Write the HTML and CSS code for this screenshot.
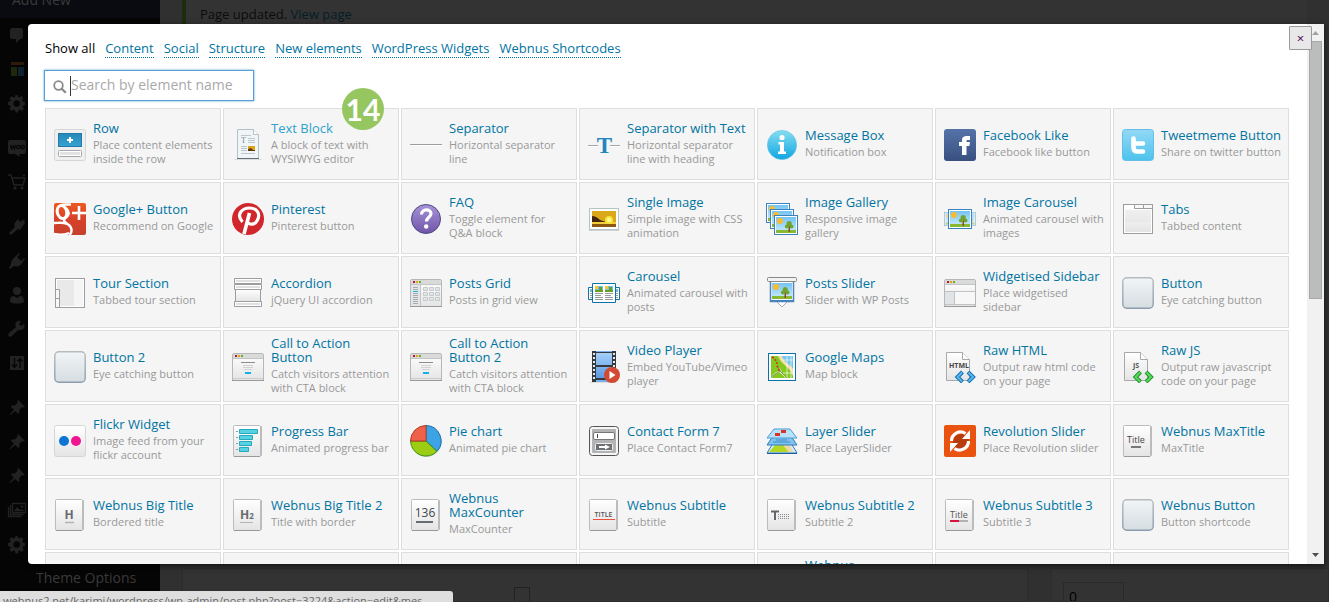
FILE: index.html
```html
<!DOCTYPE html>
<html lang="en">
<head>
<meta charset="utf-8">
<title>Add element</title>
<link rel="stylesheet" href="styles.css">
</head>
<body>
<svg class="defs" aria-hidden="true">
  <defs>
    <linearGradient id="gGrey" x1="0" y1="0" x2="0" y2="1"><stop offset="0" stop-color="#fff"/><stop offset="1" stop-color="#e4e4e4"/></linearGradient>
    <linearGradient id="gBtn" x1="0" y1="0" x2="0" y2="1"><stop offset="0" stop-color="#f1f5f6"/><stop offset="1" stop-color="#d5dde1"/></linearGradient>
    <linearGradient id="gBtnEdge" x1="0" y1="0" x2="0" y2="1"><stop offset="0" stop-color="#b6bbbd"/><stop offset="1" stop-color="#8b9dad"/></linearGradient>
    <linearGradient id="gSky" x1="0" y1="0" x2="0" y2="1"><stop offset="0" stop-color="#74c4f4"/><stop offset="1" stop-color="#cdecfb"/></linearGradient>
    <linearGradient id="gInfo" x1="0" y1="0" x2="0" y2="1"><stop offset="0" stop-color="#84def0"/><stop offset="1" stop-color="#10a6e2"/></linearGradient>
    <linearGradient id="gFb" x1="0" y1="0" x2="0" y2="1"><stop offset="0" stop-color="#5573a8"/><stop offset="1" stop-color="#3a4f80"/></linearGradient>
    <linearGradient id="gTw" x1="0" y1="0" x2="0" y2="1"><stop offset="0" stop-color="#94d8f6"/><stop offset="1" stop-color="#4cc3ec"/></linearGradient>
    <linearGradient id="gGp" x1="0" y1="0" x2="0" y2="1"><stop offset="0" stop-color="#ee5a22"/><stop offset=".5" stop-color="#d8412a"/><stop offset="1" stop-color="#c5402e"/></linearGradient>
    <linearGradient id="gFaq" x1="0" y1="0" x2="0" y2="1"><stop offset="0" stop-color="#a893d8"/><stop offset="1" stop-color="#6f55a8"/></linearGradient>
    <linearGradient id="gRow" x1="0" y1="0" x2="0" y2="1"><stop offset="0" stop-color="#2587b8"/><stop offset="1" stop-color="#36a3d2"/></linearGradient>
    <linearGradient id="gFilm" x1="0" y1="0" x2="0" y2="1"><stop offset="0" stop-color="#a4d0f8"/><stop offset="1" stop-color="#5d98e4"/></linearGradient>
  </defs>
  <symbol id="btn" viewBox="0 0 32 32"><rect x=".8" y=".8" width="30.4" height="30.4" rx="4" fill="url(#gBtn)" stroke="url(#gBtnEdge)" stroke-width="1.4"/></symbol>
  <symbol id="card" viewBox="0 0 32 32"><path d="M26 1.5h3.5v29H26z" fill="#f4f4f4" stroke="#bbb"/><rect x="1.5" y=".5" width="27" height="31" rx="1" fill="url(#gGrey)" stroke="#bcbcbc"/><path d="M2 31.5h26" stroke="#999"/></symbol>
  <symbol id="win" viewBox="0 0 32 32"><rect x=".5" y="2.500" width="31" height="27" rx="1.500" fill="url(#gGrey)" stroke="#b7b7b7"/><path d="M1 3h30v4H1z" fill="#d9dbdb"/><path d="M1 7.500h30" stroke="#c4c4c4"/><path d="M0 29.500h32" stroke="#999"/><path d="M3 4h2v2H3z" fill="#c4102c"/><path d="M6 4h2v2H6z" fill="#e0a510"/><path d="M9 4h2v2H9z" fill="#76a72d"/></symbol>
  <symbol id="cta" viewBox="0 0 32 32"><use href="#win" width="32" height="32"/><path d="M9 11.500h14" stroke="#8c8c8c"/><path d="M11 14.500h10M11 16.500h10M12 18.500h8" stroke="#d2d2d2"/><path d="M13 21h6v2h-6z" fill="#14b1e7"/><path d="M1 27.500h30" stroke="#ccc"/></symbol>
  <symbol id="pic" viewBox="0 0 24 20"><rect x=".5" y=".5" width="23" height="19" fill="#fff" stroke="#3c82bd"/><rect x="2" y="2" width="20" height="16" fill="url(#gSky)"/><path d="M2 15h20v3H2z" fill="#89b833"/><circle cx="6" cy="6" r="3" fill="#f7bc31"/><path d="M14.500 10h1.500v7h-1.500z" fill="#8a4b22"/><circle cx="15.200" cy="8.500" r="2.600" fill="#71a42d"/><circle cx="12.900" cy="11.500" r="2" fill="#71a42d"/><circle cx="17.500" cy="11.500" r="2" fill="#71a42d"/></symbol>
  <symbol id="doc" viewBox="0 0 32 32"><path d="M2.500 1.500h16l7 7v21h-23z" fill="url(#gGrey)" stroke="#a9a9a9"/><path d="M18.500 1.500v7h7" fill="#fff" stroke="#a9a9a9"/></symbol>
  <symbol id="pin" viewBox="0 0 20 20"><path d="M10.400 3l.9-.9 6.600 6.600-1 .9-1.800-.3-2.800 2.800.1 3-1 .9-3.200-3.100-5.200 4.400-.5-.5 4.400-5.200L3.800 8.400l.9-1 3 .1 2.800-2.700z"/></symbol>
  <symbol id="gear" viewBox="0 0 20 20"><path fill-rule="evenodd" d="M18 12v-3l-2.300-.4-.6-1.500 1.400-1.900-2.200-2.100-1.900 1.300-1.500-.6L10.500 2h-2l-.5 1.900-1.600.6-1.800-1.300-2.100 2.100 1.300 1.900-.6 1.400L1 9v3l2.200.4.600 1.500-1.300 1.900 2.100 2.100 1.800-1.300 1.600.6.500 2.300h2.500l.4-2.300 1.500-.6 1.900 1.300 2.200-2.100-1.400-1.900.6-1.500zM9.700 13.800a3.300 3.300 0 110-6.600 3.300 3.300 0 010 6.600z"/></symbol>
</svg>

<div class="admin">
  <nav class="sidebar" aria-label="Admin menu">
    <div class="sub-top">Add New</div>
    <div class="menu-group">
      <svg viewBox="0 0 20 20"><path d="M5 3h9a2 2 0 012 2v7a2 2 0 01-2 2h-1l-4 4v-4H5a2 2 0 01-2-2V5a2 2 0 012-2z"/></svg>
      <svg viewBox="0 0 20 20"><path fill="#2e1b0a" d="M4 3h13v3H4z"/><path fill="#1e280e" d="M4 8h6v9H4z"/><path fill="#102130" d="M11 8h6v9h-6z"/></svg>
      <svg viewBox="0 0 20 20"><use href="#gear"/></svg>
    </div>
    <div class="menu-group">
      <svg viewBox="0 0 20 20"><path d="M3 2h14a2 2 0 012 2v10a2 2 0 01-2 2h-5l1 3-5-3H3a2 2 0 01-2-2V4a2 2 0 012-2z"/><path d="M3.500 7l1.200 4 1.500-3 1.300 3 1-4" fill="none" stroke="#060606" stroke-width="1.200"/><circle cx="11.300" cy="9" r="1.700" fill="none" stroke="#060606" stroke-width="1.200"/><circle cx="15.700" cy="9" r="1.700" fill="none" stroke="#060606" stroke-width="1.200"/></svg>
      <svg viewBox="0 0 20 20"><path d="M1 3h3l3 10h9l2-7H5M16 4l2-1" fill="none" stroke="#222" stroke-width="1.500"/><circle cx="8" cy="16" r="1.600"/><circle cx="15" cy="16" r="1.600"/></svg>
    </div>
    <div class="menu-group">
      <svg viewBox="0 0 20 20"><path d="M11 2l2 3 4-3 1 4-5 7-2-1-7 6-2-2 6-6-1-3z"/></svg>
      <svg viewBox="0 0 20 20"><path d="M12 2l1 1-3 3 4 4 3-3 1 1-3 4c-1 3-5 4-8 3l-4 3-1-1 2-4c0-3 2-6 5-8z"/></svg>
      <svg viewBox="0 0 20 20"><circle cx="10" cy="6" r="4"/><path d="M3 17c0-4 1-6 4-6l3 2 3-2c3 0 4 2 4 6-3 2-11 2-14 0z"/></svg>
      <svg viewBox="0 0 20 20"><path d="M17 5l-3 2-2-2 2-3c-4-1-7 2-5 6l-7 6c-2 3 1 5 3 3l6-6c5 1 8-3 6-6z"/></svg>
      <svg viewBox="0 0 20 20"><path d="M3 3h14v14H3z"/><path d="M7.500 5v9M5 11.500l2.500 3 2.500-3M13 15V6M10.500 8.500L13 5.500l2.500 3" fill="none" stroke="#060606" stroke-width="1.400"/></svg>
    </div>
    <div class="menu-group">
      <svg viewBox="0 0 20 20"><use href="#pin"/></svg>
      <svg viewBox="0 0 20 20"><use href="#pin"/></svg>
      <svg viewBox="0 0 20 20"><use href="#pin"/></svg>
      <svg viewBox="0 0 20 20"><path d="M5.500 3.500h13v9h-13zM3.500 5v9.500h13M1.500 7v9.500h13" fill="none" stroke="#222" stroke-width="1.300"/><path d="M7 11l3-4 3 3 2-1 2 2z"/><circle cx="15" cy="6.500" r="1.200"/></svg>
      <svg viewBox="0 0 20 20"><use href="#gear"/></svg>
    </div>
    <div class="sub-bottom">Theme Options</div>
  </nav>
  <main class="page">
    <p class="notice">Page updated. <a href="#view">View page</a></p>
    <div class="panels">
      <div class="panel panel-main"><label for="transp">Transparent header:</label><input type="checkbox" id="transp"></div>
      <div class="panel panel-side"><input type="text" value="0" aria-label="Order"></div>
    </div>
  </main>
</div>

<section class="modal" role="dialog" aria-label="Add element">
  <div class="content">
    <nav class="filters">
      <a class="current" href="#all">Show all</a>
      <a href="#content">Content</a>
      <a href="#social">Social</a>
      <a href="#structure">Structure</a>
      <a href="#new">New elements</a>
      <a href="#widgets">WordPress Widgets</a>
      <a href="#shortcodes">Webnus Shortcodes</a>
    </nav>
    <div class="search">
      <svg viewBox="0 0 14 14" aria-hidden="true"><circle cx="5.500" cy="5.500" r="4.300" fill="none" stroke="#8a8a8a" stroke-width="1.800"/><path d="M8.500 8.500l4.300 4.300" stroke="#8a8a8a" stroke-width="2.300"/></svg>
      <input type="text" placeholder="Search by element name" aria-label="Search by element name">
    </div>
    <ul class="grid">
      <li><a class="el" href="#el"><svg viewBox="0 0 32 32"><rect x=".5" y=".5" width="31" height="31" rx="2" fill="#efefef" stroke="#d6d6d6"/><rect x="4.500" y="4.500" width="23" height="13" fill="url(#gRow)" stroke="#2079a8"/><path d="M16 8v6M13 11h6" stroke="#fff" stroke-width="2"/><rect x="4.500" y="21.500" width="23" height="6" rx="1" fill="#fff" stroke="#a6a6a6"/><path d="M6 23h20v3H6z" fill="#e2e2e2"/></svg><span class="txt"><b>Row</b><i>Place content elements inside the row</i></span></a></li>
      <li class="hot"><a class="el" href="#el"><svg viewBox="0 0 32 32"><path d="M2 30.500h28" stroke="#ddd"/><path d="M5.500.5h16l5 5v24h-21z" fill="#f0f6f7" stroke="#b3c2c5"/><path d="M5 29.500h22" stroke="#5f7074"/><path d="M21.500.5v5h5" fill="#fff" stroke="#b3c2c5"/><text x="9" y="14" class="serif" font-size="8" fill="#788">T</text><path d="M9 6.500h10M16 9.500h7M16 11.500h7M16 13.500h7M9 17.500h6M9 19.500h6M9 21.500h6M9 24.500h14" stroke="#bcc8ca"/><path d="M16 17h7v5h-7z" fill="#d9a516"/><path d="M16 20l3-1 2 2h2v1h-7z" fill="#65380c"/></svg><span class="txt"><b>Text Block</b><i>A block of text with WYSIWYG editor</i></span></a><span class="badge">14</span></li>
      <li><a class="el" href="#el"><svg viewBox="0 0 32 32"><path d="M0 15.500h32" stroke="#9d9d9d"/><path d="M0 16.500h32" stroke="#fff"/></svg><span class="txt"><b>Separator</b><i>Horizontal separator line</i></span></a></li>
      <li><a class="el" href="#el"><svg viewBox="0 0 32 32"><path d="M0 16.500h10M22 16.500h10" stroke="#a6a6a6"/><path d="M0 17.500h10M22 17.500h10" stroke="#fff"/><text x="16.500" y="24" class="serif" font-size="23" font-weight="bold" text-anchor="middle" fill="#2484be">T</text></svg><span class="txt"><b>Separator with Text</b><i>Horizontal separator line with heading</i></span></a></li>
      <li><a class="el" href="#el"><svg viewBox="0 0 32 32"><circle cx="16" cy="16" r="14.600" fill="url(#gInfo)" stroke="#5fc0e4" stroke-width=".6"/><circle cx="16" cy="8.500" r="2.600" fill="#fff"/><path d="M12.500 13h5.500v9.500h2V25h-8v-2.500h2v-7h-1.500z" fill="#fff"/></svg><span class="txt"><b>Message Box</b><i>Notification box</i></span></a></li>
      <li><a class="el" href="#el"><svg viewBox="0 0 32 32"><rect width="32" height="32" rx="3" fill="url(#gFb)"/><path d="M18 26V17h-3v-4h3v-2c0-3 2-4 4.500-4H26v4h-2.200c-.8 0-1.300.3-1.300 1.200v.8H26l-.6 4h-2.900v9z" fill="#fff"/></svg><span class="txt"><b>Facebook Like</b><i>Facebook like button</i></span></a></li>
      <li><a class="el" href="#el"><svg viewBox="0 0 32 32"><rect x=".5" y=".5" width="31" height="31" rx="3" fill="url(#gTw)" stroke="#63bfea"/><path d="M11.500 9.500v9q0 4 4 4H21M11.500 14.500H21" fill="none" stroke="#fff" stroke-width="4.600" stroke-linecap="round"/></svg><span class="txt"><b>Tweetmeme Button</b><i>Share on twitter button</i></span></a></li>

      <li><a class="el" href="#el"><svg viewBox="0 0 32 32"><rect width="32" height="32" rx="2" fill="url(#gGp)"/><g fill="none" stroke="#fff"><ellipse cx="8" cy="9" rx="4.700" ry="6.600" transform="rotate(-14 8 9)" stroke-width="3"/><path d="M17 1.500h-5q-3 0-6 1M12 5c5 5 2 8-.5 10-3 2-1 4 2 6 5 3 5 8 2 11M0 20c5 0 9-1 13 1M0 31c5 1 10 1 15-1" stroke-width="2.400"/><path d="M18 10h14M25 3v14" stroke-width="2.600"/></g></svg><span class="txt"><b>Google+ Button</b><i>Recommend on Google</i></span></a></li>
      <li><a class="el" href="#el"><svg viewBox="0 0 32 32"><circle cx="16" cy="16" r="16" fill="#d1272c"/><path d="M10.500 19c-7-8 0-14 7-14 8 0 11 6 8 12-3 6-9 4.500-9.500 2" fill="none" stroke="#fff" stroke-width="3.200"/><path d="M17.500 10l-5.500 21" stroke="#fff" stroke-width="3.600"/></svg><span class="txt"><b>Pinterest</b><i>Pinterest button</i></span></a></li>
      <li><a class="el" href="#el"><svg viewBox="0 0 32 32"><circle cx="16" cy="16" r="14.500" fill="url(#gFaq)" stroke="#4c4a80"/><path d="M11.500 11.500c0-6 9.500-6 9.500-1 0 4-4.500 3.500-4.500 8" fill="none" stroke="#fff" stroke-width="3.200"/><circle cx="16.200" cy="23.500" r="2.200" fill="#fff"/></svg><span class="txt"><b>FAQ</b><i>Toggle element for Q&amp;A&nbsp;block</i></span></a></li>
      <li><a class="el" href="#el"><svg viewBox="0 0 32 32"><rect x="1.500" y="5.500" width="29" height="21" fill="#fff" stroke="#b6c3c6"/><path d="M1 27.500h30" stroke="#d2d2d2"/><path d="M4 8h24v16H4z" fill="#dba81b"/><path d="M4 19h24v2H4z" fill="#f2cf3a"/><path d="M4 13q4 0 8 4l6 2H4z" fill="#44250f"/><path d="M4 21h24v3H4z" fill="#8b5811"/><circle cx="21" cy="17" r="4" fill="#f4e43c"/><circle cx="21" cy="17" r="2" fill="#fffb9c"/></svg><span class="txt"><b>Single Image</b><i>Simple image with CSS animation</i></span></a></li>
      <li><a class="el" href="#el"><svg viewBox="0 0 32 32"><use href="#pic" width="24" height="20"/><use href="#pic" x="4" y="6" width="24" height="20"/><use href="#pic" x="8" y="12" width="24" height="20"/></svg><span class="txt"><b>Image Gallery</b><i>Responsive image gallery</i></span></a></li>
      <li><a class="el" href="#el"><svg viewBox="0 0 32 32"><g opacity=".55"><use href="#pic" y="9" width="17" height="14"/><use href="#pic" x="15" y="9" width="17" height="14"/></g><use href="#pic" x="4" y="6" width="24" height="20"/></svg><span class="txt"><b>Image Carousel</b><i>Animated carousel with images</i></span></a></li>
      <li><a class="el" href="#el"><svg viewBox="0 0 32 32"><rect x="1.500" y="1.500" width="29" height="29" fill="#fff" stroke="#9d9d9d"/><path d="M3 3h8v4h18v22H3z" fill="url(#gGrey)"/><path d="M3 7h26v12H3z" fill="#e4e4e4" opacity=".5"/><path d="M12.500 1.500h9v4h-9zM21.500 1.500h9v4h-9z" fill="#f8f8f8" stroke="#9d9d9d"/></svg><span class="txt"><b>Tabs</b><i>Tabbed content</i></span></a></li>

      <li><a class="el" href="#el"><svg viewBox="0 0 32 32"><rect x="1.500" y="1.500" width="29" height="29" fill="#fff" stroke="#9d9d9d"/><path d="M6 3h23v26H6zM3 3h4v9H3z" fill="#e9e9e9"/><path d="M20 3h9v26h-9z" fill="#f5f5f5"/><path d="M1.500 12.500h4v9h-4zM1.500 21.500h4v9h-4z" fill="#f8f8f8" stroke="#9d9d9d"/></svg><span class="txt"><b>Tour Section</b><i>Tabbed tour section</i></span></a></li>
      <li><a class="el" href="#el"><svg viewBox="0 0 32 32"><path d="M3.500 12.500h25v12h-25z" fill="url(#gGrey)" stroke="#9d9d9d"/><path d="M2.500 1.500h27v5h-27zM2.500 7.500h27v5h-27zM2.500 24.500h27v5h-27z" fill="#fff" stroke="#9d9d9d"/><path d="M4 4h24M4 10h24M4 27h24" stroke="#e0e0e0" stroke-width="2"/></svg><span class="txt"><b>Accordion</b><i>jQuery UI accordion</i></span></a></li>
      <li><a class="el" href="#el"><svg viewBox="0 0 32 32"><use href="#win" width="32" height="32"/><path d="M1 8h9v21H1z" fill="#e1e6e9"/><path d="M3 10.500h5M3 12.500h5M3 16.500h5M3 18.500h5M3 20.500h5M3 22.500h5M3 24.500h5M3 26.500h5" stroke="#aaa"/><path d="M3 14.500h5" stroke="#1db0e2"/><path d="M10.500 8v21" stroke="#c5c5c5"/><g fill="#e2e6e7" stroke="#c5cbcd"><path d="M13.500 10.500h4v3h-4zM19.500 10.500h4v3h-4zM25.500 10.500h4v3h-4zM13.500 15.500h4v3h-4zM19.500 15.500h4v3h-4zM25.500 15.500h4v3h-4zM13.500 20.500h4v3h-4zM19.500 20.500h4v3h-4zM25.500 20.500h4v3h-4z"/></g></svg><span class="txt"><b>Posts Grid</b><i>Posts in grid view</i></span></a></li>
      <li><a class="el" href="#el"><svg viewBox="0 0 32 32"><path d="M.5 10.500h31v12H.5z" fill="#fff" stroke="#0c73aa"/><path d="M2 12h2v3H2zM28 12h2v3h-2z" fill="#73b5d0"/><path d="M2 16.500h2M2 18.500h2M2 20.500h2M28 16.500h2M28 18.500h2M28 20.500h2" stroke="#999"/><path d="M4.500 6.500h23v19h-23z" fill="#fff" stroke="#0c73aa"/><path d="M7 9h8v6H7zM17 9h8v6h-8z" fill="#73c3e7"/><path d="M7 13h8v2H7zM17 13h8v2h-8zM11 10h3v4h-3zM21 10h3v4h-3z" fill="#699e26"/><path d="M7 9h3v3H7zM17 9h3v3h-3z" fill="#f2c63d"/><path d="M7 16.500h8M7 18.500h6M7 20.500h8M7 22.500h8M17 16.500h8M17 18.500h6M17 20.500h8M17 22.500h8" stroke="#9a9a9a"/></svg><span class="txt"><b>Carousel</b><i>Animated carousel with posts</i></span></a></li>
      <li><a class="el" href="#el"><svg viewBox="0 0 32 32"><path d="M10 24h12l-6 6z" fill="#fff" stroke="#aaa"/><use href="#pic" x="4" y="4" width="24" height="20"/><path d="M4.500 4v20.500h23V4" fill="none" stroke="#4c85ba" stroke-width="1.500"/><rect x="1.500" y=".5" width="29" height="4" rx="1" fill="#f3f3f3" stroke="#888"/></svg><span class="txt"><b>Posts Slider</b><i>Slider with WP Posts</i></span></a></li>
      <li><a class="el" href="#el"><svg viewBox="0 0 32 32"><use href="#win" width="32" height="32"/><path d="M1 15h10v13H1z" fill="#e0e4e7"/><path d="M11 15h20v12H11z" fill="#f7f7f7"/><path d="M1 14.500h30M1 27.500h30M10.500 15v12" stroke="#c2c2c2"/></svg><span class="txt"><b>Widgetised Sidebar</b><i>Place widgetised sidebar</i></span></a></li>
      <li><a class="el" href="#el"><svg viewBox="0 0 32 32"><use href="#btn" width="32" height="32"/></svg><span class="txt"><b>Button</b><i>Eye catching button</i></span></a></li>

      <li><a class="el" href="#el"><svg viewBox="0 0 32 32"><use href="#btn" width="32" height="32"/></svg><span class="txt"><b>Button 2</b><i>Eye catching button</i></span></a></li>
      <li><a class="el" href="#el"><svg viewBox="0 0 32 32"><use href="#cta" width="32" height="32"/></svg><span class="txt"><b>Call to Action Button</b><i>Catch visitors attention with CTA block</i></span></a></li>
      <li><a class="el" href="#el"><svg viewBox="0 0 32 32"><use href="#cta" width="32" height="32"/></svg><span class="txt"><b>Call to Action Button&nbsp;2</b><i>Catch visitors attention with CTA block</i></span></a></li>
      <li><a class="el" href="#el"><svg viewBox="0 0 32 32"><path d="M2 31.500h26" stroke="#ddd"/><path d="M4 0h24v31H4z" fill="#34393d"/><path d="M8 2h16v12H8zM8 16h16v11H8z" fill="url(#gFilm)"/><path d="M8 0h16v1H8zM8 29h16v2H8z" fill="#79b0ef"/><path d="M6 2v28M26 2v28" stroke="#e7edf1" stroke-width="2" stroke-dasharray="2 2"/><circle cx="24" cy="24" r="8" fill="#d24a34"/><path d="M21.500 20v8l6-4z" fill="#fff"/></svg><span class="txt"><b>Video Player</b><i>Embed YouTube/Vimeo player</i></span></a></li>
      <li><a class="el" href="#el"><svg viewBox="0 0 32 32"><rect x="2.500" y="2.500" width="27" height="27" fill="#fff" stroke="#0c73aa"/><path d="M5 5h22v22H5z" fill="#85c91e"/><path d="M12 5h15v20C24 15 16 15 12 5z" fill="#f2dfb0"/><path d="M16 5h11v13C24 13 18 12 16 5z" fill="#74c6ec"/><path d="M5 27q4-7 9-6l6 6M13 17q3 2 2 6M21 5v22M25 5v22M17 9h10M17 22h10" fill="none" stroke="#fff" stroke-width="1" opacity=".65"/><path d="M5 26l9-6 7 7M14 20l-2-5" fill="none" stroke="#8b9a72"/><path d="M6 6q5 3 5 7t3 7" fill="none" stroke="#d62f20" stroke-width="1.600" stroke-dasharray="2 1.500"/></svg><span class="txt"><b>Google Maps</b><i>Map block</i></span></a></li>
      <li><a class="el" href="#el"><svg viewBox="0 0 32 32"><use href="#doc" width="32" height="32"/><text x="5" y="17" font-size="7" font-weight="bold" fill="#444">HTML</text><path d="M18.500 21l-5 5 5 5M24 21l5 5-5 5" fill="none" stroke="#1171b1" stroke-width="4"/><path d="M18 21.500L13.500 26l4.500 4.500M24.500 21.500L29 26l-4.500 4.500" fill="none" stroke="#5bb6ec" stroke-width="2"/></svg><span class="txt"><b>Raw HTML</b><i>Output raw html code on your page</i></span></a></li>
      <li><a class="el" href="#el"><svg viewBox="0 0 32 32"><use href="#doc" width="32" height="32"/><text x="11" y="17" font-size="7" font-weight="bold" fill="#555">JS</text><path d="M18.500 21l-5 5 5 5M24 21l5 5-5 5" fill="none" stroke="#24902f" stroke-width="4"/><path d="M18 21.500L13.500 26l4.500 4.500M24.500 21.500L29 26l-4.500 4.500" fill="none" stroke="#53dc5b" stroke-width="2"/></svg><span class="txt"><b>Raw JS</b><i>Output raw javascript code on your page</i></span></a></li>

      <li><a class="el" href="#el"><svg viewBox="0 0 32 32"><rect x=".5" y=".5" width="31" height="31" rx="2" fill="url(#gGrey)" stroke="#d6d6d6"/><circle cx="10" cy="16" r="5" fill="#0b74d4"/><circle cx="22" cy="16" r="5" fill="#f01392"/></svg><span class="txt"><b>Flickr Widget</b><i>Image feed from your flickr account</i></span></a></li>
      <li><a class="el" href="#el"><svg viewBox="0 0 32 32"><use href="#card" width="32" height="32"/><path d="M4 6.500h2M4 12.500h2M4 18.500h2M4 24.500h2" stroke="#999"/><g fill="#55d3e2" stroke="#27a9bd"><path d="M7.500 4.500h18v4h-18zM7.500 10.500h13v4h-13zM7.500 16.500h12v4h-12zM7.500 22.500h9v4h-9z"/></g></svg><span class="txt"><b>Progress Bar</b><i>Animated progress bar</i></span></a></li>
      <li><a class="el" href="#el"><svg viewBox="0 0 32 32"><ellipse cx="16" cy="18" rx="14" ry="14" fill="#ccc"/><path d="M16 16V.5a15.500 15.500 0 0111 26z" fill="#3ca4e4" stroke="#1c69aa"/><path d="M16 16l11 10.500A15.500 15.500 0 01.5 16z" fill="#9ccd12" stroke="#3a9416"/><path d="M16 16H.5A15.500 15.500 0 0116 .5z" fill="#ef6249" stroke="#b63b2b"/></svg><span class="txt"><b>Pie chart</b><i>Animated pie chart</i></span></a></li>
      <li><a class="el" href="#el"><svg viewBox="0 0 32 32"><rect x="1.500" y="1.500" width="29" height="29" rx="3" fill="#f5f5f5" stroke="#555"/><rect x="4" y="4" width="24" height="24" rx="1" fill="#b3b3b3"/><rect x="5.500" y="7.500" width="21" height="7" rx="1.500" fill="#fff" stroke="#777"/><path d="M9.500 9v4" stroke="#444"/><rect x="7.500" y="18.500" width="17" height="7" rx="1" fill="#6a7073" stroke="#eee"/><path d="M11 21h6v-1.500l5 2.500-5 2.500V23h-6z" fill="#fff"/></svg><span class="txt"><b>Contact Form 7</b><i>Place Contact Form7</i></span></a></li>
      <li><a class="el" href="#el"><svg viewBox="0 0 32 32"><path d="M7 18h18l6 10H1z" fill="#d2eefb" stroke="#337fba"/><path d="M9 20h8l6 7H3z" fill="#b4d823"/><path d="M17 20h7l3 7h-4z" fill="#f2d5a3"/><path d="M1 28.500h30" stroke="#195f9f"/><path d="M7 11h18l6 9H1z" fill="#7ec3ee" stroke="#337fba"/><path d="M10 15h11M7 17h17" stroke="#428dc8"/><path d="M8 4h16l7 9H1z" fill="#b9e2fa" stroke="#4b9bd4"/><path d="M9 8h5v3H9zM15 5h5v3h-5z" fill="#d53525"/></svg><span class="txt"><b>Layer Slider</b><i>Place LayerSlider</i></span></a></li>
      <li><a class="el" href="#el"><svg viewBox="0 0 32 32"><rect width="32" height="32" rx="2" fill="#ea5210"/><circle cx="17" cy="17" r="8" fill="#b93d0c"/><path d="M7.500 16a9 9 0 0114-7.500M24.500 16a9 9 0 01-14 7.500" fill="none" stroke="#fff" stroke-width="3.200"/><path d="M26 5v9h-8zM6 27V18h8z" fill="#fff"/></svg><span class="txt"><b>Revolution Slider</b><i>Place Revolution slider</i></span></a></li>
      <li><a class="el" href="#el"><svg viewBox="0 0 32 32"><use href="#card" width="32" height="32"/><text x="5" y="18" font-size="9" fill="#444">Title</text><path d="M9 22h10" stroke="#777" stroke-width="2"/></svg><span class="txt"><b>Webnus MaxTitle</b><i>MaxTitle</i></span></a></li>

      <li><a class="el" href="#el"><svg viewBox="0 0 32 32"><use href="#card" width="32" height="32"/><text x="15" y="20" font-size="12" font-weight="bold" text-anchor="middle" fill="#666b70">H</text><path d="M11 23.500h9" stroke="#b3b3b3" stroke-width="1.500"/></svg><span class="txt"><b>Webnus Big Title</b><i>Bordered title</i></span></a></li>
      <li><a class="el" href="#el"><svg viewBox="0 0 32 32"><use href="#card" width="32" height="32"/><text x="8" y="20" font-size="12" font-weight="bold" fill="#666b70">H<tspan font-size="8">2</tspan></text><path d="M8 23.500h13" stroke="#b3b3b3"/></svg><span class="txt"><b>Webnus Big Title 2</b><i>Title with border</i></span></a></li>
      <li><a class="el" href="#el"><svg viewBox="0 0 32 32"><use href="#card" width="32" height="32"/><text x="15" y="18" font-size="12" text-anchor="middle" fill="#444">136</text><path d="M6 23h17" stroke="#666c70" stroke-width="2"/></svg><span class="txt"><b>Webnus MaxCounter</b><i>MaxCounter</i></span></a></li>
      <li><a class="el" href="#el"><svg viewBox="0 0 32 32"><use href="#card" width="32" height="32"/><text x="15.500" y="18" font-size="7" font-weight="600" text-anchor="middle" fill="#555">TITLE</text><path d="M5 20.500h22" stroke="#e9513d"/></svg><span class="txt"><b>Webnus Subtitle</b><i>Subtitle</i></span></a></li>
      <li><a class="el" href="#el"><svg viewBox="0 0 32 32"><use href="#card" width="32" height="32"/><path d="M5 12.500h8M9 12v9" stroke="#62676b" stroke-width="2"/><path d="M12 15.500h11M12 17.500h11M12 19.500h11" stroke="#888" stroke-dasharray="1 1"/></svg><span class="txt"><b>Webnus Subtitle 2</b><i>Subtitle 2</i></span></a></li>
      <li><a class="el" href="#el"><svg viewBox="0 0 32 32"><use href="#card" width="32" height="32"/><text x="6" y="19" font-size="9" fill="#555">Title</text><path d="M6 22h9" stroke="#d8123b" stroke-width="2"/><path d="M15 22h9" stroke="#b1b1b1" stroke-width="2"/></svg><span class="txt"><b>Webnus Subtitle 3</b><i>Subtitle 3</i></span></a></li>
      <li><a class="el" href="#el"><svg viewBox="0 0 32 32"><use href="#btn" width="32" height="32"/></svg><span class="txt"><b>Webnus Button</b><i>Button shortcode</i></span></a></li>

      <li><a class="el" href="#el" aria-label="Element"></a></li>
      <li><a class="el" href="#el" aria-label="Element"></a></li>
      <li><a class="el" href="#el" aria-label="Element"></a></li>
      <li><a class="el" href="#el" aria-label="Element"></a></li>
      <li><a class="el" href="#el"><svg viewBox="0 0 32 32"><use href="#card" width="32" height="32"/></svg><span class="txt"><b>Webnus<br>Testimonial</b><i>Testimonial slider with author image</i></span></a></li>
      <li><a class="el" href="#el" aria-label="Element"></a></li>
      <li><a class="el" href="#el" aria-label="Element"></a></li>
    </ul>
  </div>
  <div class="scroll" aria-hidden="true">
    <svg viewBox="0 0 17 17"><path d="M5 11h7L8.500 7z" fill="#a3a3a3"/></svg>
    <div class="track"><div class="thumb"></div></div>
    <svg viewBox="0 0 17 17"><path d="M5 6h7l-3.500 4z" fill="#505050"/></svg>
  </div>
  <button class="close" type="button" aria-label="Close">×</button>
</section>
<div class="status">webnus2.net/karimi/wordpress/wp-admin/post.php?post=3224&amp;action=edit&amp;mes...</div>
</body>
</html>
```
FILE: styles.css
```css
* { box-sizing: border-box; }
html, body { height: 100%; }
body {
  margin: 0;
  overflow: hidden;
  background: #303030;
  font: 13px/18px "Open Sans", "Noto Sans", sans-serif;
  color: #0b0b0b;
}
.defs { position: absolute; width: 0; height: 0; }

/* dimmed admin page */
.admin { display: flex; height: 100%; }
.sidebar {
  width: 160px;
  background: #050505;
  color: #3a3a3a;
  font-size: 14px;
}
.sub-top {
  height: 18px;
  padding-left: 12px;
  line-height: 0;
  background: #0a0a11;
}
.menu-group {
  display: flex;
  flex-direction: column;
  margin-bottom: 11px;
  padding-left: 7px;
}
.menu-group svg { width: 20px; height: 34px; fill: #222; }
.menu-group:nth-last-child(2) { margin-bottom: 0; }
.sub-bottom { padding-left: 36px; line-height: 34px; }
.page {
  flex: 1;
  display: flex;
  flex-direction: column;
  justify-content: space-between;
  padding: 0 22px;
}
.notice {
  margin: 0;
  padding: 5px 14px;
  border-left: 4px solid #1c2d0d;
  background: #333;
}
.notice a { color: #031d29; text-decoration: none; }
.panels { display: flex; gap: 23px; height: 34px; margin-right: -22px; }
.panel { background: #333; border: 1px solid #2c2c2c; }
.panel-main {
  flex: 1;
  display: flex;
  align-items: flex-start;
  gap: 188px;
  padding: 18px 14px 0;
  font-weight: 600;
  overflow: hidden;
}
.panel-main input {
  flex: none;
  appearance: none;
  width: 16px;
  height: 16px;
  margin: 0;
  border: 1px solid #222;
}
.panel-side { width: 278px; padding: 13px 11px 0; overflow: hidden; }
.panel-side input {
  width: 61px;
  height: 28px;
  padding: 0 5px;
  border: 1px solid #292929;
  background: #333;
  font: inherit;
  font-size: 14px;
}

/* element picker */
.modal {
  position: absolute;
  inset: 24px 5px 38px 28px;
  display: flex;
  background: #fff;
  border-radius: 4px 0 0 4px;
  box-shadow: 0 2px 6px rgba(0, 0, 0, .6);
  overflow: hidden;
}
.content { flex: 1; padding: 15px 18px 0 17px; overflow: hidden; }
.filters { display: flex; gap: 10px; }
.filters a {
  color: #0074a2;
  text-decoration: none;
  border-bottom: 1px dotted #0074a2;
}
.filters .current { color: #000; border-color: transparent; }
.search {
  display: flex;
  align-items: center;
  gap: 3px;
  width: 210px;
  height: 31px;
  margin: 12px 0 7px -1px;
  padding-left: 8px;
  border: 1px solid #5b9dd9;
  box-shadow: 0 0 2px rgba(30, 140, 190, .8);
}
.search svg { width: 14px; height: 14px; margin-top: 3px; }
.search input {
  flex: 1;
  min-width: 0;
  height: 20px;
  padding: 0 0 2px;
  border: 0;
  border-left: 1px solid #333;
  outline: 0;
  background: none;
  font: inherit;
  font-size: 14px;
}
.search input::placeholder { color: #a9a9a9; opacity: 1; }
.grid {
  display: grid;
  grid-template-columns: repeat(7, 1fr);
  gap: 2px;
  margin: 0;
  padding: 0;
  list-style: none;
}
.grid li { position: relative; }
.el {
  display: flex;
  align-items: center;
  gap: 7px;
  height: 72px;
  padding: 2px 4px 0 8px;
  border: 1px solid #dedede;
  background: #f5f5f5;
  color: #0074a2;
  text-decoration: none;
}
.el svg { flex: none; width: 32px; height: 32px; }
.el svg text { font-family: "Open Sans", sans-serif; }
.el svg .serif { font-family: "Liberation Serif", serif; }
.txt { display: flex; flex-direction: column; gap: 3px; padding-bottom: 3px; line-height: 14px; }
.txt b { font-weight: 500; }
.txt i { font-style: normal; font-size: 11px; color: #999; }
.hot .el { color: #2ea2cc; }
.badge {
  position: absolute;
  top: -20px;
  right: 15px;
  width: 42px;
  height: 42px;
  border-radius: 50%;
  background: #96c660;
  color: #fff;
  font: bold 30px/42px Lato, sans-serif;
  text-align: center;
}

.scroll { display: flex; flex-direction: column; width: 17px; background: #f1f1f1; }
.scroll svg { width: 17px; height: 17px; }
.track { flex: 1; padding: 0 2px; }
.thumb { height: 51%; background: #bbbdbd; border: 1px solid #a8a8a8; }
.close {
  position: absolute;
  top: 2px;
  right: 12px;
  width: 23px;
  height: 24px;
  padding: 0;
  border: 1px solid #999;
  border-radius: 1px;
  background: #e8e8e8;
  color: #4f0050;
  font: 13px/20px "Open Sans", sans-serif;
}
.status {
  position: absolute;
  left: 0;
  bottom: 0;
  width: 453px;
  height: 11px;
  padding-left: 3px;
  border-radius: 0 3px 0 0;
  background: #dedede;
  color: #666;
  font-size: 11px;
  line-height: 20px;
  white-space: nowrap;
  overflow: hidden;
}
```
